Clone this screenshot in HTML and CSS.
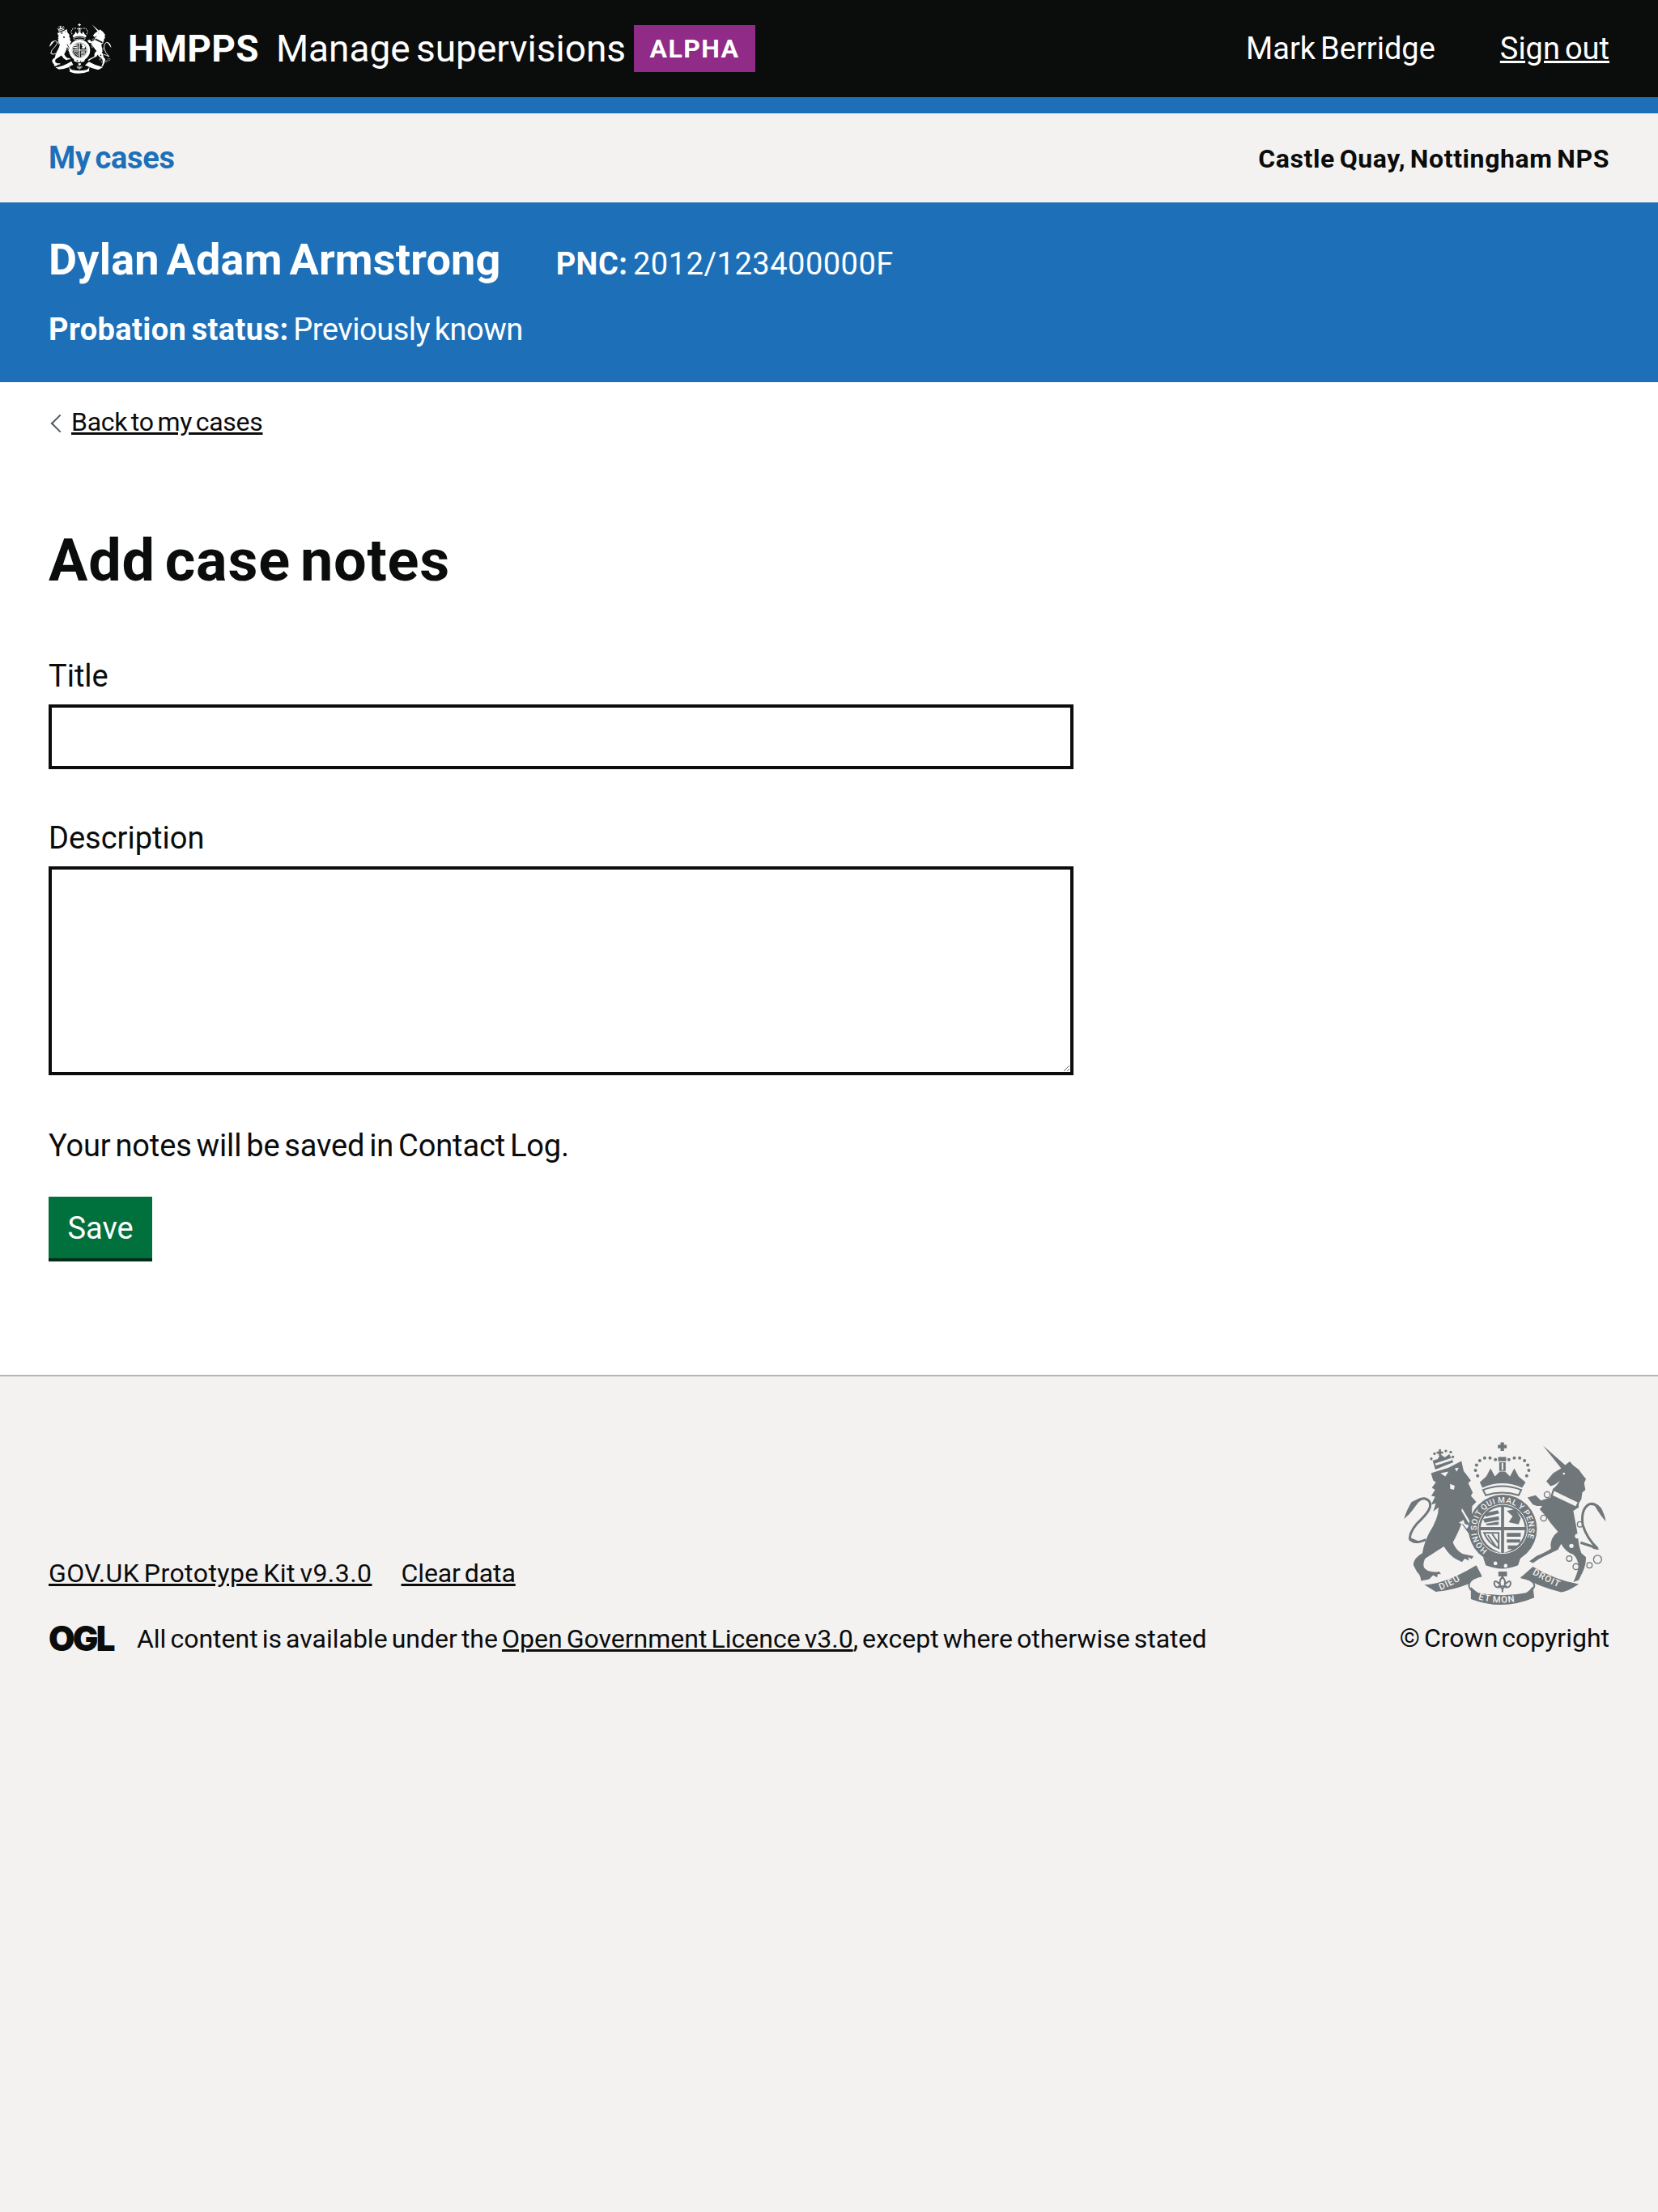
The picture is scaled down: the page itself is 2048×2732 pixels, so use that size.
FILE: index.html

```html
<!DOCTYPE html>
<html lang="en">
<head>
    <meta charset="UTF-8">
    <title>Add case notes - Manage supervisions</title>
    <link rel="stylesheet" href="styles.css">
</head>
<body>
    <!-- Royal arms, used white in the header and grey in the footer -->
    <svg class="defs" xmlns="http://www.w3.org/2000/svg">
      <defs>
        <symbol id="arms" viewBox="90 60 760 612">
          <!-- lion -->
          <path d="M197 178 L262 158 L310 133 L318 170 L345 205 L335 215 L352 250 L345 262 L365 285 L350 300 Q345 340 362 395 L372 412 L350 420 L322 382 L310 365 Q300 395 278 435 Q290 465 315 478 L355 486 L348 497 L335 490 L338 503 L322 495 L312 508 L295 500 Q265 485 245 450 Q215 470 175 495 Q165 515 172 530 Q190 550 228 543 L234 553 L222 552 L220 565 L205 557 L190 572 L160 578 Q158 555 145 545 L132 520 Q130 495 165 475 Q170 440 190 400 Q225 345 225 305 L205 320 L215 290 L198 295 L212 265 L198 262 L212 240 L200 232 L215 212 L205 205Z"/>
          <path class="arms-gap" d="M232 178 L262 172 L250 190Z M285 160 L300 158 L292 172Z M268 218 L285 225 L282 240 L268 236Z M312 308 L366 398 L358 400 L310 318Z M300 362 L318 352 L322 366 L338 372 L330 385 L316 368Z"/>
          <path class="arms-line" d="M178 425 Q130 445 118 420 Q120 385 165 345 Q205 305 190 282 Q172 262 148 282 Q128 305 110 330"/>
          <path d="M160 268 Q130 320 97 348 Q105 318 125 285Z M118 416 L150 430 L115 428Z"/>
          <!-- lion crown -->
          <path d="M213 165 L203 132 L222 126 L232 108 L248 120 L265 108 L280 138Z M226 90h8v8h8v8h-8v8h-8v-8h-8v-8h8z"/>
          <path class="arms-gap" d="M212 142 L272 122 L275 130 L215 150Z"/>
          <g class="arms-dots">
            <circle cx="198" cy="125" r="5"/><circle cx="210" cy="106" r="5"/><circle cx="252" cy="96" r="5"/><circle cx="270" cy="100" r="5"/><circle cx="278" cy="118" r="5"/>
          </g>
          <!-- centre crown -->
          <path d="M455 64h13v9h10v13h-10v10h-13v-10h-10v-13h10z M446 118h30v16h-30z M450 138h24v32h-24z"/>
          <path class="arms-gap" d="M459 140h6v26h-6z"/>
          <path d="M378 212 L402 190 L418 160 L434 190 L452 172 L472 172 L490 190 L506 160 L522 190 L548 212 L535 232 Q461 200 388 232Z"/>
          <g class="arms-dots">
            <circle cx="362" cy="168" r="6"/><circle cx="366" cy="148" r="6"/><circle cx="378" cy="132" r="6"/><circle cx="396" cy="122" r="6"/><circle cx="416" cy="122" r="6"/><circle cx="436" cy="128" r="6"/><circle cx="486" cy="128" r="6"/><circle cx="506" cy="122" r="6"/><circle cx="526" cy="122" r="6"/><circle cx="544" cy="132" r="6"/><circle cx="556" cy="148" r="6"/><circle cx="560" cy="168" r="6"/><circle cx="552" cy="188" r="6"/><circle cx="370" cy="188" r="6"/>
          </g>
          <path class="arms-line thin" d="M390 240 Q461 212 532 240 L522 260 Q461 240 400 260Z"/>
          <!-- garter and shield -->
          <circle cx="463" cy="385" r="127"/>
          <circle class="arms-ring" cx="463" cy="385" r="91"/>
          <path class="arms-gap" d="M457 378 V303 A84 84 0 0 0 381 378Z M468 378 V303 A84 84 0 0 1 545 378Z M457 390 H381 Q386 448 457 474Z M468 390 H545 Q540 448 468 474Z"/>
          <path d="M396 326 L445 316 L450 328 L400 340Z M390 348 L448 338 L450 352 L396 362Z M400 366 L448 358 L448 370 L405 372Z M478 318 L510 312 L530 345 L522 368 L485 360 L500 338Z M478 400 H530 V414 H478Z M478 424 H528 V436 H478Z M482 446 H518 L505 460 H482Z"/>
          <path class="arms-line thin" d="M394 400 H448 L448 456 Q410 440 394 400Z M408 408 L436 448 M424 404 L446 436"/>
          <path d="M390 490 Q462 530 530 490 L520 520 Q462 545 400 520Z"/>
          <circle class="arms-gap" cx="436" cy="513" r="7"/><circle class="arms-gap" cx="474" cy="522" r="7"/>
          <!-- unicorn -->
          <path d="M612 75 L695 148 L712 135 L725 150 L745 165 L760 185 L772 200 L765 215 L770 240 L758 250 L755 275 L745 290 L745 305 L725 318 Q735 370 742 410 Q745 450 755 475 L772 490 Q772 520 760 545 L745 575 L725 582 Q740 550 745 525 Q742 495 725 480 Q695 470 680 440 L668 462 Q630 480 600 495 L575 512 L562 505 L590 485 Q625 470 642 458 Q635 420 668 395 Q640 365 625 340 L600 312 L610 300 L590 300 L575 295 L555 268 L585 260 L605 280 L640 268 L650 235 Q665 225 675 205 Q660 222 640 226 L625 208 L650 178 L680 160Z"/>
          <circle class="arms-gap" cx="740" cy="412" r="9"/><circle class="arms-gap" cx="718" cy="448" r="8"/><circle class="arms-gap" cx="690" cy="180" r="4"/>
          <path class="arms-collar" d="M652 240 L745 285 L735 305 L645 262Z"/>
          <path class="arms-line" d="M752 436 Q790 448 815 458 Q775 420 760 370 Q752 310 785 293 Q815 290 830 320"/>
          <path d="M790 286 Q835 295 846 358 Q825 335 805 300Z M812 452 L822 462 L795 458Z"/>
          <g class="arms-rings">
            <circle cx="815" cy="498" r="15"/><circle cx="785" cy="520" r="10"/><circle cx="735" cy="525" r="11"/><circle cx="710" cy="495" r="10"/><circle cx="750" cy="368" r="10"/><circle cx="628" cy="258" r="11"/><circle cx="615" cy="345" r="11"/>
          </g>
          <!-- motto ribbon -->
          <path d="M172 592 Q250 590 365 520 L385 558 Q345 565 335 590 Q270 615 215 618Z M530 565 L575 525 Q660 575 745 590 Q700 620 680 620 Q600 600 560 575Z"/>
          <path d="M345 600 Q365 618 372 622 Q462 640 550 622 Q565 612 575 598 L580 640 Q462 690 345 645Z"/>
          <path class="arms-line thin" d="M385 560 Q335 570 338 598 Q345 622 372 625 M530 565 Q585 575 580 600 Q570 620 552 625"/>
          <path d="M447 543h32v18h-32z"/>
          <path class="arms-line thin" d="M462 562 Q482 585 462 610 Q442 585 462 562Z M452 590 Q430 568 432 590 Q435 606 455 600 M472 590 Q494 568 492 590 Q489 606 469 600 M445 598 H479 M462 610 V620"/>
        </symbol>
      </defs>
    </svg>

    <header class="top-bar">
        <div class="top-brand">
            <svg class="brand-arms"><use href="#arms"/></svg>
            <span class="brand-org">HMPPS</span>
            <span class="brand-service">Manage supervisions</span>
            <strong class="phase-tag">ALPHA</strong>
        </div>
        <div class="top-user">
            <span>Mark Berridge</span>
            <a href="#">Sign out</a>
        </div>
    </header>

    <nav class="sub-nav">
        <a href="#" class="sub-nav-link">My cases</a>
        <span class="sub-nav-office">Castle Quay, Nottingham NPS</span>
    </nav>

    <section class="offender-panel">
        <div class="offender-row">
            <span class="offender-name">Dylan Adam Armstrong</span>
            <span class="offender-pnc"><b>PNC:</b> 2012/123400000F</span>
        </div>
        <div class="offender-status"><b>Probation status:</b> Previously known</div>
    </section>

    <main class="page-main">
        <a href="#" class="back-link">Back to my cases</a>
        <h1 class="page-title">Add case notes</h1>
        <form class="notes-form">
            <label class="field-label" for="title">Title</label>
            <input class="field-input" id="title" type="text">
            <label class="field-label" for="description">Description</label>
            <textarea class="field-textarea" id="description"></textarea>
            <p class="field-hint">Your notes will be saved in Contact Log.</p>
            <button type="button" class="save-button">Save</button>
        </form>
    </main>

    <footer class="page-footer">
        <div class="footer-meta">
            <div class="footer-links">
                <a href="#">GOV.UK Prototype Kit v9.3.0</a>
                <a href="#">Clear data</a>
            </div>
            <div class="footer-licence">
                <span class="ogl-logo">OGL</span>
                <span>All content is available under the <a href="#">Open Government Licence v3.0</a>, except where otherwise stated</span>
            </div>
        </div>
        <div class="footer-crown">
            <svg class="footer-arms" viewBox="90 60 760 612">
              <use href="#arms" x="90" y="60" width="760" height="612"/>
              <defs>
                <path id="garter-arc" d="M407 464 A97 97 0 1 1 519 464"/>
                <path id="ribbon-left" d="M232 612 Q290 590 340 552"/>
                <path id="ribbon-mid" d="M372 646 Q462 672 552 646"/>
                <path id="ribbon-right" d="M572 552 Q630 585 690 610"/>
              </defs>
              <g class="arms-text">
                <text class="garter-text"><textPath href="#garter-arc">HONI SOIT QUI MAL Y PENSE</textPath></text>
                <text><textPath href="#ribbon-left">DIEU</textPath></text>
                <text><textPath href="#ribbon-mid">ET MON</textPath></text>
                <text><textPath href="#ribbon-right">DROIT</textPath></text>
              </g>
            </svg>
            <a href="#">© Crown copyright</a>
        </div>
    </footer>
</body>
</html>
```

FILE: styles.css

```css
html, body {
    height: 100%;
}
* {
    word-spacing: -0.09em;
}
body {
    margin: 0;
    min-height: 100%;
    display: flex;
    flex-direction: column;
    font-family: Roboto, Arial, sans-serif;
    font-size: 38px;
    color: #0b0c0c;
    background: white;
}
.defs {
    position: absolute;
    width: 0;
    height: 0;
}
.arms-gap {
    fill: var(--arms-bg);
}
.arms-ring {
    fill: none;
    stroke: var(--arms-bg);
    stroke-width: 3;
}
.arms-line {
    fill: none;
    stroke: currentColor;
    stroke-width: 9;
}
.arms-line.thin {
    stroke-width: 6;
}
.arms-collar {
    fill: var(--arms-bg);
    stroke: currentColor;
    stroke-width: 6;
}
.arms-dots {
    fill: currentColor;
}
.arms-rings {
    fill: none;
    stroke: currentColor;
    stroke-width: 4;
}
.arms-text {
    fill: #f3f2f1;
    font-size: 34px;
    font-weight: 500;
    letter-spacing: 3px;
}
.garter-text {
    font-size: 30px;
    letter-spacing: 2px;
}
.top-bar {
    --arms-bg: #0b0c0c;
    display: flex;
    justify-content: space-between;
    align-items: center;
    height: 120px;
    padding: 0 60px;
    background: #0b0c0c;
    color: white;
    border-bottom: 20px solid #1d70b8;
}
.top-brand {
    display: flex;
    align-items: center;
}
.brand-arms {
    width: 78px;
    height: 66px;
    fill: white;
    color: white;
    margin-right: 20px;
}
.brand-org {
    font-size: 46px;
    font-weight: 700;
    letter-spacing: 0.3px;
    margin-right: 21px;
}
.brand-service {
    font-size: 46px;
    margin-right: 10px;
}
.phase-tag {
    font-size: 32px;
    letter-spacing: 1.4px;
    padding: 10px 19.5px;
    background: #912b88;
}
.top-user {
    display: flex;
    gap: 80px;
}
.top-user a {
    color: white;
}
.sub-nav {
    display: flex;
    justify-content: space-between;
    align-items: center;
    height: 110px;
    padding: 0 60px;
    background: #f3f2f1;
}
.sub-nav-link {
    font-weight: 700;
    letter-spacing: -0.3px;
    color: #1d70b8;
    text-decoration: none;
}
.sub-nav-office {
    font-size: 32px;
    font-weight: 700;
    letter-spacing: 0.6px;
    padding-top: 2px;
}
.offender-panel {
    height: 222px;
    box-sizing: border-box;
    padding: 39px 60px 0;
    background: #1d70b8;
    color: white;
}
.offender-row {
    display: flex;
    align-items: baseline;
    gap: 68px;
}
.offender-name {
    font-size: 54px;
    font-weight: 700;
    letter-spacing: 0.2px;
}
.offender-pnc {
    letter-spacing: 0.5px;
}
.offender-status {
    margin-top: 33px;
    letter-spacing: -0.45px;
}
.offender-status b {
    letter-spacing: 0.4px;
}
.page-main {
    padding: 25px 60px 140px;
}
.back-link {
    display: inline-block;
    position: relative;
    padding-left: 28px;
    font-size: 32px;
    letter-spacing: -0.3px;
    color: #0b0c0c;
}
.back-link::before {
    content: "";
    position: absolute;
    left: 6px;
    top: 13px;
    width: 14px;
    height: 14px;
    border-left: 2px solid #505a5f;
    border-bottom: 2px solid #505a5f;
    transform: rotate(45deg);
}
.page-title {
    margin: 112px 0 77px;
    font-size: 72px;
    letter-spacing: 0.75px;
    line-height: 80px;
}
.notes-form {
    display: flex;
    flex-direction: column;
    align-items: flex-start;
}
.field-label {
    margin-bottom: 10px;
    line-height: 50px;
}
.field-input,
.field-textarea {
    display: block;
    box-sizing: border-box;
    width: 1266px;
    margin: 0 0 60px;
    border: 4px solid #0b0c0c;
    border-radius: 0;
    background: white;
}
.field-input {
    height: 80px;
}
.field-textarea {
    height: 258px;
}
.field-hint {
    margin: 2px 0 38px;
    letter-spacing: -0.13px;
    line-height: 50px;
}
.save-button {
    height: 80px;
    padding: 2px 23.5px 0;
    border: 0;
    border-bottom: 4px solid #002d18;
    border-radius: 0;
    background: #00703c;
    color: white;
    font: inherit;
}
.page-footer {
    --arms-bg: #f3f2f1;
    flex: 1;
    display: flex;
    justify-content: space-between;
    align-items: flex-start;
    padding: 80px 60px 0;
    border-top: 2px solid #b1b4b6;
    background: #f3f2f1;
    font-size: 32px;
}
.page-footer a {
    color: #0b0c0c;
}
.footer-meta {
    margin-top: 144px;
}
.footer-links {
    display: flex;
    gap: 36px;
}
.footer-links a:first-child {
    letter-spacing: 0.45px;
}
.footer-links a:last-child {
    letter-spacing: -0.1px;
}
.footer-licence {
    display: flex;
    align-items: center;
    gap: 29px;
    margin-top: 43px;
}
.ogl-logo {
    font-family: "Inter", sans-serif;
    font-size: 42px;
    font-weight: 900;
    line-height: 34px;
    letter-spacing: -2.7px;
}
.footer-crown {
    display: flex;
    flex-direction: column;
    align-items: center;
}
.footer-crown a {
    text-decoration: none;
    margin-top: 20px;
}
.footer-arms {
    width: 253px;
    height: 204px;
    fill: #6f777b;
    color: #6f777b;
}
```
